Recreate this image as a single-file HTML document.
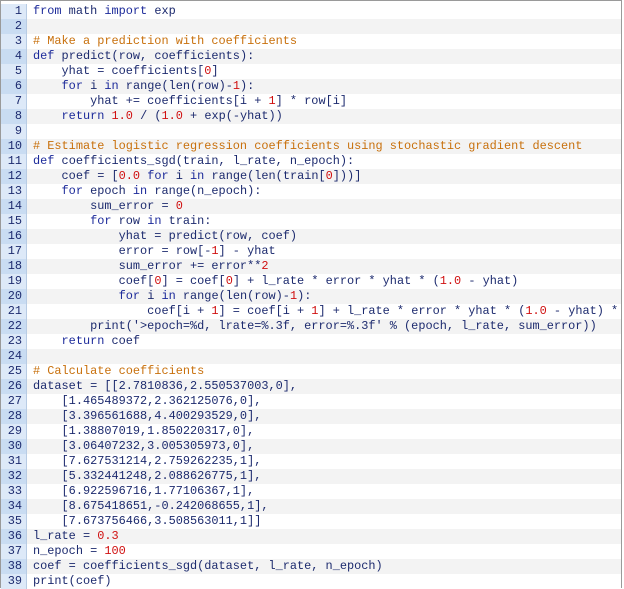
<!DOCTYPE html>
<html><head><meta charset="utf-8"><style>
body{margin:0;width:624px;height:588px;overflow:hidden;background:#fff;font-family:"Liberation Mono",monospace;font-size:11.9px;color:#1c2a6e}
.w{position:absolute;left:0;top:0;width:622px;height:588px;border:1px solid #9a9a9a;border-bottom:none;padding-top:3px;box-sizing:border-box}
.r{height:15px;line-height:15px;display:flex;white-space:pre}
.r:nth-child(even){background:#f3f3f3}
.n{width:26px;text-align:right;padding-right:4px;box-sizing:border-box;background:#dde9f8;border-right:1px solid #b8cce4;color:#1c2a6e;flex:none}
.r:nth-child(even) .n{background:#c9dcf2}
.c{padding-left:6px}
.k{color:#1c2a9a}.m{color:#c8700c}.d{color:#d01010}
</style></head><body><div class="w">
<div class="r"><span class="n">1</span><span class="c"><span class="k">from</span> math <span class="k">import</span> exp</span></div>
<div class="r"><span class="n">2</span><span class="c"></span></div>
<div class="r"><span class="n">3</span><span class="c m"># Make a prediction with coefficients</span></div>
<div class="r"><span class="n">4</span><span class="c"><span class="k">def</span> predict(row, coefficients):</span></div>
<div class="r"><span class="n">5</span><span class="c">    yhat = coefficients[<span class="d">0</span>]</span></div>
<div class="r"><span class="n">6</span><span class="c">    <span class="k">for</span> i <span class="k">in</span> range(len(row)-<span class="d">1</span>):</span></div>
<div class="r"><span class="n">7</span><span class="c">        yhat += coefficients[i + <span class="d">1</span>] * row[i]</span></div>
<div class="r"><span class="n">8</span><span class="c">    <span class="k">return</span> <span class="d">1.0</span> / (<span class="d">1.0</span> + exp(-yhat))</span></div>
<div class="r"><span class="n">9</span><span class="c"></span></div>
<div class="r"><span class="n">10</span><span class="c m"># Estimate logistic regression coefficients using stochastic gradient descent</span></div>
<div class="r"><span class="n">11</span><span class="c"><span class="k">def</span> coefficients_sgd(train, l_rate, n_epoch):</span></div>
<div class="r"><span class="n">12</span><span class="c">    coef = [<span class="d">0.0</span> <span class="k">for</span> i <span class="k">in</span> range(len(train[<span class="d">0</span>]))]</span></div>
<div class="r"><span class="n">13</span><span class="c">    <span class="k">for</span> epoch <span class="k">in</span> range(n_epoch):</span></div>
<div class="r"><span class="n">14</span><span class="c">        sum_error = <span class="d">0</span></span></div>
<div class="r"><span class="n">15</span><span class="c">        <span class="k">for</span> row <span class="k">in</span> train:</span></div>
<div class="r"><span class="n">16</span><span class="c">            yhat = predict(row, coef)</span></div>
<div class="r"><span class="n">17</span><span class="c">            error = row[-<span class="d">1</span>] - yhat</span></div>
<div class="r"><span class="n">18</span><span class="c">            sum_error += error**<span class="d">2</span></span></div>
<div class="r"><span class="n">19</span><span class="c">            coef[<span class="d">0</span>] = coef[<span class="d">0</span>] + l_rate * error * yhat * (<span class="d">1.0</span> - yhat)</span></div>
<div class="r"><span class="n">20</span><span class="c">            <span class="k">for</span> i <span class="k">in</span> range(len(row)-<span class="d">1</span>):</span></div>
<div class="r"><span class="n">21</span><span class="c">                coef[i + <span class="d">1</span>] = coef[i + <span class="d">1</span>] + l_rate * error * yhat * (<span class="d">1.0</span> - yhat) *</span></div>
<div class="r"><span class="n">22</span><span class="c">        print('&gt;epoch=%d, lrate=%.3f, error=%.3f' % (epoch, l_rate, sum_error))</span></div>
<div class="r"><span class="n">23</span><span class="c">    <span class="k">return</span> coef</span></div>
<div class="r"><span class="n">24</span><span class="c"></span></div>
<div class="r"><span class="n">25</span><span class="c m"># Calculate coefficients</span></div>
<div class="r"><span class="n">26</span><span class="c">dataset = [[2.7810836,2.550537003,0],</span></div>
<div class="r"><span class="n">27</span><span class="c">    [1.465489372,2.362125076,0],</span></div>
<div class="r"><span class="n">28</span><span class="c">    [3.396561688,4.400293529,0],</span></div>
<div class="r"><span class="n">29</span><span class="c">    [1.38807019,1.850220317,0],</span></div>
<div class="r"><span class="n">30</span><span class="c">    [3.06407232,3.005305973,0],</span></div>
<div class="r"><span class="n">31</span><span class="c">    [7.627531214,2.759262235,1],</span></div>
<div class="r"><span class="n">32</span><span class="c">    [5.332441248,2.088626775,1],</span></div>
<div class="r"><span class="n">33</span><span class="c">    [6.922596716,1.77106367,1],</span></div>
<div class="r"><span class="n">34</span><span class="c">    [8.675418651,-0.242068655,1],</span></div>
<div class="r"><span class="n">35</span><span class="c">    [7.673756466,3.508563011,1]]</span></div>
<div class="r"><span class="n">36</span><span class="c">l_rate = <span class="d">0.3</span></span></div>
<div class="r"><span class="n">37</span><span class="c">n_epoch = <span class="d">100</span></span></div>
<div class="r"><span class="n">38</span><span class="c">coef = coefficients_sgd(dataset, l_rate, n_epoch)</span></div>
<div class="r"><span class="n">39</span><span class="c">print(coef)</span></div>
</div></body></html>
